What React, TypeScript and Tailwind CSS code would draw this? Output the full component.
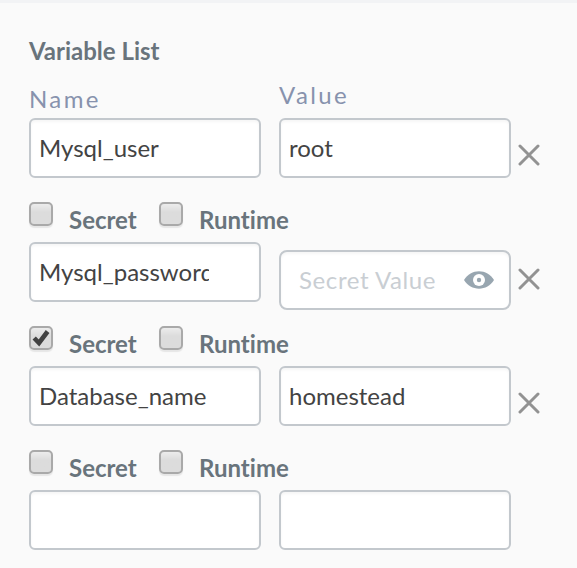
import { useState } from "react";

type Variable = {
  name: string;
  value: string;
  secret: boolean;
  runtime: boolean;
};

const initialVariables: Variable[] = [
  { name: "Mysql_user", value: "root", secret: false, runtime: false },
  { name: "Mysql_password", value: "", secret: true, runtime: false },
  { name: "Database_name", value: "homestead", secret: false, runtime: false },
];

const rowClass =
  "grid grid-cols-[minmax(0,1fr)_minmax(0,1fr)_11px] gap-x-[18px]";

const fieldClass =
  "block h-[60px] w-full border-2 border-[#c3c8cd] bg-white pb-0.5 text-2xl text-[#434343] shadow-[inset_0_2px_3px_rgba(0,0,0,0.04)] outline-none";

const plainFieldClass = `${fieldClass} rounded-md pr-[50px] pl-2`;

function Flag({
  id,
  label,
  checked,
  onChange,
}: {
  id: string;
  label: string;
  checked: boolean;
  onChange: () => void;
}) {
  return (
    <div className="flex w-[130px] shrink-0 items-start gap-4">
      <span className="relative block size-6 shrink-0">
        <input
          id={id}
          type="checkbox"
          checked={checked}
          onChange={onChange}
          className="block size-6 appearance-none rounded-[5px] border-2 border-[#a9a9a9] bg-linear-to-b from-[#ececec] to-[#dcdcdc] to-40% shadow-[0_2px_1px_rgba(0,0,0,0.08)]"
        />
        {checked && (
          <svg
            viewBox="0 0 24 24"
            className="pointer-events-none absolute inset-0 size-6"
            aria-hidden="true"
          >
            <path
              d="M5.200 12 10 17 18.600 5.500"
              fill="none"
              stroke="#424242"
              strokeWidth="4.600"
            />
          </svg>
        )}
      </span>
      <label htmlFor={id} className="pt-1 text-2xl leading-7 font-bold text-[#69747c]">
        {label}
      </label>
    </div>
  );
}

function EyeIcon() {
  return (
    <svg viewBox="0 0 30 18" className="h-[18px] w-[30px]" aria-hidden="true">
      <path
        d="M0 9C3.500 3.500 9 .3 15 .3S26.500 3.500 30 9C26.500 14.500 21 17.700 15 17.700S3.500 14.500 0 9Z"
        fill="#98a6b0"
      />
      <circle cx="15" cy="9" r="6" fill="#fff" />
      <circle cx="15" cy="9" r="2.200" fill="#98a6b0" />
    </svg>
  );
}

function CrossIcon() {
  return (
    <svg viewBox="0 0 22 22" className="size-[22px]" aria-hidden="true">
      <path
        d="M2 2 20 20M20 2 2 20"
        stroke="#929292"
        strokeWidth="3"
        strokeLinecap="round"
      />
    </svg>
  );
}

export default function App() {
  const [variables, setVariables] = useState(initialVariables);

  const update = (index: number, change: Partial<Variable>) =>
    setVariables((list) =>
      list.map((item, i) => (i === index ? { ...item, ...change } : item)),
    );

  return (
    <main className="min-h-screen border-t-3 border-[#f2f3f5] bg-[#fafafa] pr-[37px] pb-4 pl-[29px] font-[Lato,'Open_Sans',sans-serif] [font-variant-ligatures:none]">
      <h1 className="pt-8 text-2xl leading-8 font-bold text-[#69747c]">Variable List</h1>
      <div className={`${rowClass} pt-3 text-2xl leading-8 tracking-widest text-[#8792ad]`}>
        <span className="pt-1">Name</span>
        <span>Value</span>
      </div>
      <ul className="pt-[3px]">
        {variables.map((item, index) => (
          <li key={index} className={rowClass}>
            <div>
              <input
                aria-label="Name"
                value={item.name}
                onChange={(e) => update(index, { name: e.target.value })}
                className={plainFieldClass}
              />
              <div className="flex h-16 pt-6">
                <Flag
                  id={`secret-${index}`}
                  label="Secret"
                  checked={item.secret}
                  onChange={() => update(index, { secret: !item.secret })}
                />
                <Flag
                  id={`runtime-${index}`}
                  label="Runtime"
                  checked={item.runtime}
                  onChange={() => update(index, { runtime: !item.runtime })}
                />
              </div>
            </div>
            {item.secret ? (
              <div className="relative mt-2 h-[60px]">
                <input
                  aria-label="Value"
                  type="password"
                  placeholder="Secret Value"
                  className={`${fieldClass} rounded-lg pr-14 pl-[18px] tracking-wide placeholder:text-[#c9ced3]`}
                />
                <button
                  type="button"
                  aria-label="Show value"
                  className="absolute inset-y-0 right-[17px] flex items-center"
                >
                  <EyeIcon />
                </button>
              </div>
            ) : (
              <input
                aria-label="Value"
                value={item.value}
                onChange={(e) => update(index, { value: e.target.value })}
                className={plainFieldClass}
              />
            )}
            <button
              type="button"
              aria-label="Remove variable"
              onClick={() => setVariables((list) => list.filter((_, i) => i !== index))}
              className="mt-[26px] flex size-[22px] justify-self-end"
            >
              <CrossIcon />
            </button>
          </li>
        ))}
        <li className={rowClass}>
          <input aria-label="New name" className={plainFieldClass} />
          <input aria-label="New value" className={plainFieldClass} />
        </li>
      </ul>
    </main>
  );
}
